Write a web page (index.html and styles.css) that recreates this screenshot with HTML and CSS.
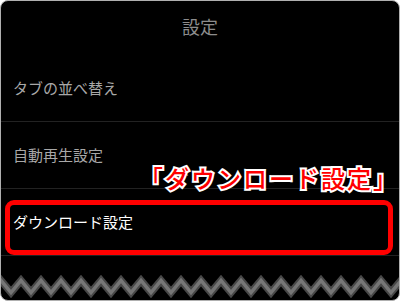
FILE: index.html
```html
<!DOCTYPE html>
<html lang="ja">
<head>
<meta charset="utf-8">
<link rel="stylesheet" href="styles.css">
</head>
<body>
<div class="frame">
  <div class="title">設定</div>
  <div class="row">タブの並べ替え</div>
  <div class="row">自動再生設定</div>
  <div class="row active">ダウンロード設定</div>
  <svg class="zigzag" width="400" height="43" viewBox="0 0 400 43">
    <polyline points="-20,24.5 -10,36.5 0,24.5 10,36.5 20,24.5 30,36.5 40,24.5 50,36.5 60,24.5 70,36.5 80,24.5 90,36.5 100,24.5 110,36.5 120,24.5 130,36.5 140,24.5 150,36.5 160,24.5 170,36.5 180,24.5 190,36.5 200,24.5 210,36.5 220,24.5 230,36.5 240,24.5 250,36.5 260,24.5 270,36.5 280,24.5 290,36.5 300,24.5 310,36.5 320,24.5 330,36.5 340,24.5 350,36.5 360,24.5 370,36.5 380,24.5 390,36.5 400,24.5 410,36.5 420,24.5" fill="none" stroke="#484848" stroke-width="7.5" stroke-linejoin="miter"/>
    <polyline points="-20,24.5 -10,36.5 0,24.5 10,36.5 20,24.5 30,36.5 40,24.5 50,36.5 60,24.5 70,36.5 80,24.5 90,36.5 100,24.5 110,36.5 120,24.5 130,36.5 140,24.5 150,36.5 160,24.5 170,36.5 180,24.5 190,36.5 200,24.5 210,36.5 220,24.5 230,36.5 240,24.5 250,36.5 260,24.5 270,36.5 280,24.5 290,36.5 300,24.5 310,36.5 320,24.5 330,36.5 340,24.5 350,36.5 360,24.5 370,36.5 380,24.5 390,36.5 400,24.5 410,36.5 420,24.5" fill="none" stroke="#767676" stroke-width="3.5" stroke-linejoin="miter"/>
  </svg>
  <div class="highlight"></div>
  <div class="callout">「ダウンロード設定」</div>
</div>
</body>
</html>
```

FILE: styles.css
```css
html, body {
  margin: 0;
  padding: 0;
  background: #ffffff;
}
body {
  width: 400px;
  height: 301px;
  overflow: hidden;
  font-family: "Noto Sans CJK JP", "Noto Sans", sans-serif;
}
.frame {
  position: relative;
  box-sizing: border-box;
  width: 400px;
  height: 301px;
  background: #000000;
  border: 1px solid #b0b0b0;
  border-radius: 8px;
  overflow: hidden;
  display: flex;
  flex-direction: column;
}
.title {
  height: 54px;
  box-sizing: border-box;
  padding-top: 12px;
  text-align: center;
  color: #8c8c8c;
  font-size: 18px;
  line-height: 26px;
}
.row {
  height: 67px;
  box-sizing: border-box;
  border-bottom: 1px solid #222222;
  padding-left: 12px;
  display: flex;
  align-items: center;
  color: #a8a8a8;
  font-size: 15px;
  line-height: 20px;
}
.row.active {
  color: #ffffff;
}
.zigzag {
  display: block;
  flex: none;
}
.highlight {
  position: absolute;
  left: 4px;
  top: 199px;
  width: 388px;
  height: 55px;
  box-sizing: border-box;
  border: 5px solid #ff0000;
  border-radius: 9px;
}
.callout {
  position: absolute;
  right: 0;
  top: 161px;
  color: #ff0000;
  font-size: 24px;
  font-weight: 500;
  line-height: 32px;
  letter-spacing: 2px;
  -webkit-text-stroke: 4px #ffffff;
  paint-order: stroke fill;
  white-space: nowrap;
}
```
